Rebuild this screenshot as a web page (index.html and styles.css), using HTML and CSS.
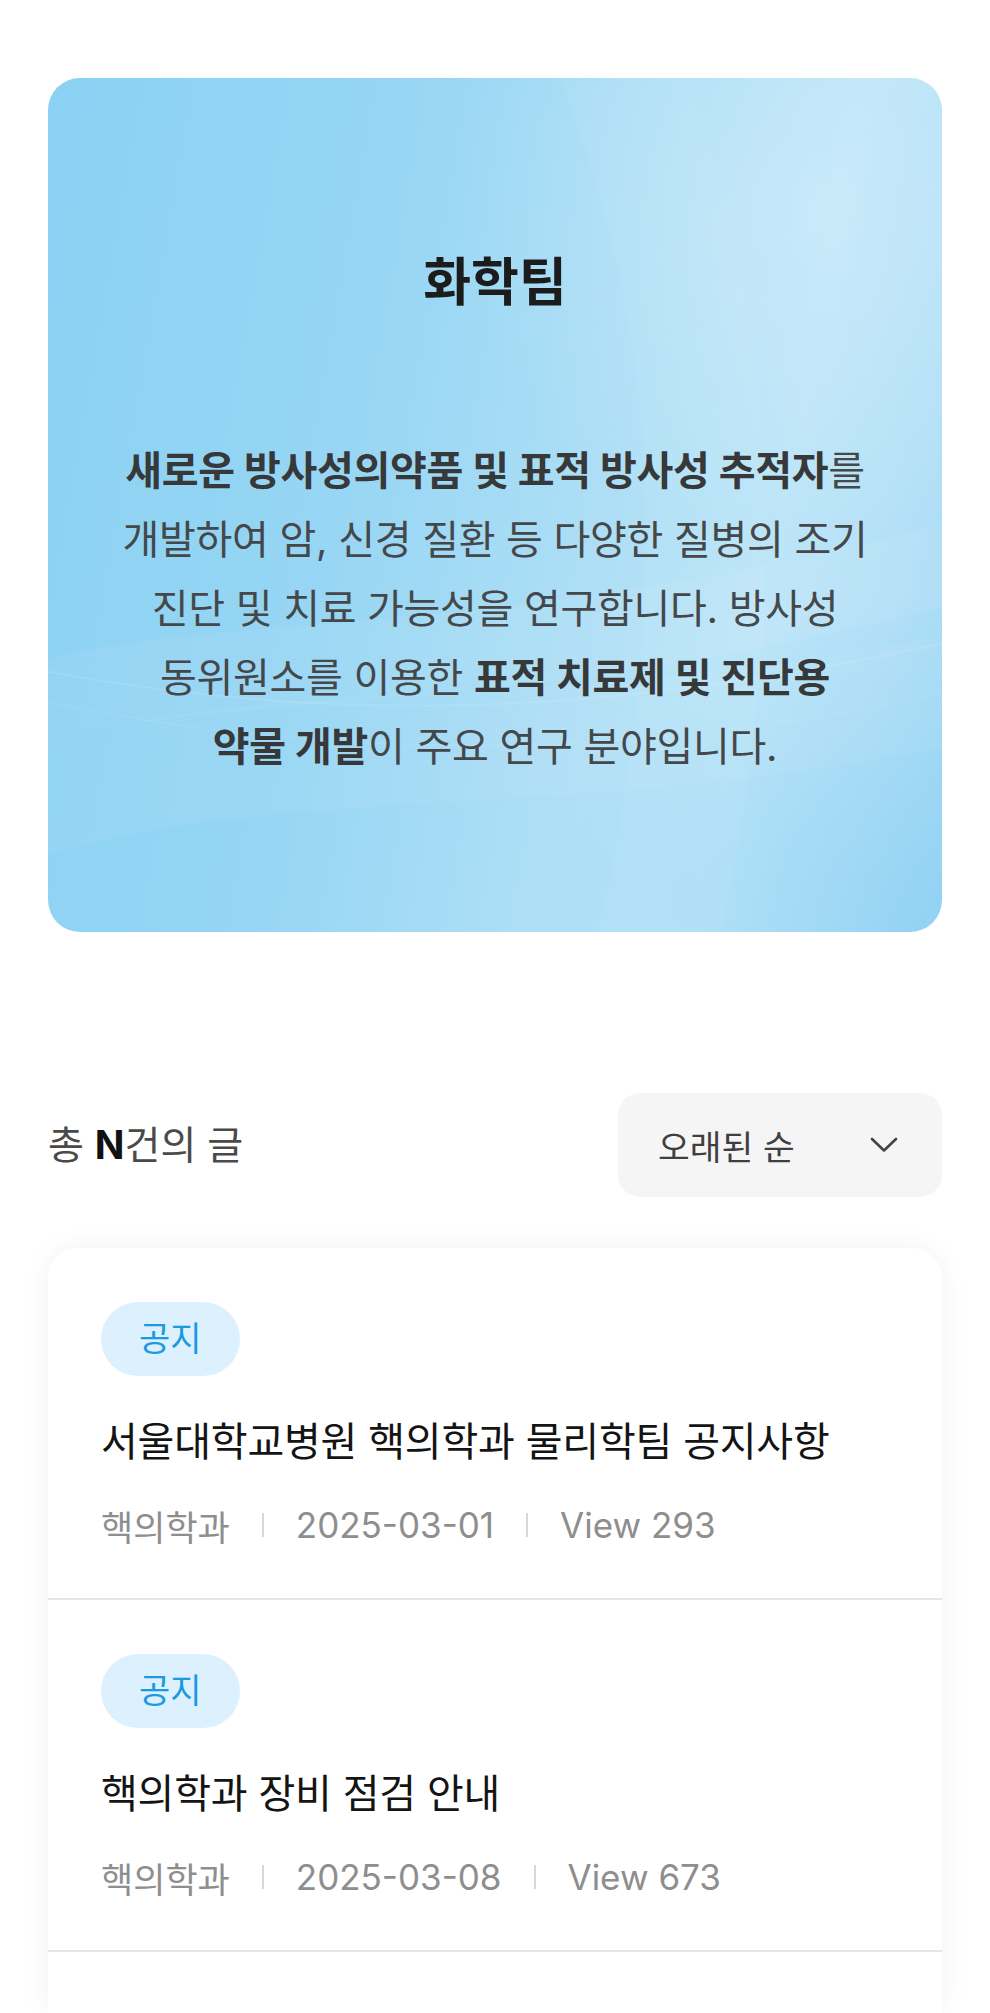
FILE: index.html
```html
<!DOCTYPE html>
<html lang="ko">
<head>
<meta charset="utf-8">
<title>화학팀</title>
<link rel="stylesheet" href="styles.css">
</head>
<body>
<div class="page">
  <section class="hero">
    <h1 class="hero-title">화학팀</h1>
    <p class="hero-desc"><strong>새로운 방사성의약품 및 표적 방사성 추적자</strong>를<br>개발하여 암, 신경 질환 등 다양한 질병의 조기<br>진단 및 치료 가능성을 연구합니다. 방사성<br>동위원소를 이용한 <strong>표적 치료제 및 진단용</strong><br><strong>약물 개발</strong>이 주요 연구 분야입니다.</p>
  </section>

  <div class="list-head">
    <p class="total">총 <b>N</b>건의 글</p>
    <button class="sort" type="button">
      <span>오래된 순</span>
      <svg class="chev" width="28" height="16" viewBox="0 0 28 16" aria-hidden="true"><path d="M2 2 L14 13.5 L26 2" fill="none" stroke="#444" stroke-width="2.6" stroke-linecap="round" stroke-linejoin="round"/></svg>
    </button>
  </div>

  <div class="board">
    <article class="post">
      <span class="badge">공지</span>
      <h2 class="post-title">서울대학교병원 핵의학과 물리학팀 공지사항</h2>
      <div class="meta"><span>핵의학과</span><i class="sep"></i><span>2025-03-01</span><i class="sep"></i><span>View 293</span></div>
    </article>
    <article class="post">
      <span class="badge">공지</span>
      <h2 class="post-title">핵의학과 장비 점검 안내</h2>
      <div class="meta"><span>핵의학과</span><i class="sep"></i><span>2025-03-08</span><i class="sep"></i><span>View 673</span></div>
    </article>
  </div>
</div>
</body>
</html>
```

FILE: styles.css
```css
* { box-sizing: border-box; }

html, body {
  margin: 0;
  padding: 0;
  background: #ffffff;
}

body {
  font-family: "Inter", "Noto Sans CJK KR", "Noto Sans", sans-serif;
  color: #222;
}

.page {
  height: 100vh;
  overflow: hidden;
  padding: 78px 48px 0;
  display: flex;
  flex-direction: column;
}

/* ---------- hero ---------- */
.hero {
  flex: none;
  height: 854px;
  border-radius: 32px;
  padding: 171px 30px 0;
  text-align: center;
  background-color: #9bd7f5;
  background-image:
    url("data:image/svg+xml;utf8,<svg xmlns='http://www.w3.org/2000/svg' width='894' height='854' viewBox='0 0 894 854' preserveAspectRatio='none'><g fill='none' stroke='white' stroke-linecap='round'><path d='M-60 640 C 160 560 420 620 960 470' stroke-width='80' stroke-opacity='0.06'/><path d='M-60 740 C 200 640 520 700 960 600' stroke-width='110' stroke-opacity='0.05'/><path d='M-20 590 C 240 640 520 650 920 560' stroke-width='2' stroke-opacity='0.10'/><path d='M-20 620 C 260 680 560 690 920 610' stroke-width='1.5' stroke-opacity='0.08'/><path d='M560 -40 C 660 200 700 500 600 900' stroke-width='120' stroke-opacity='0.04'/></g></svg>"),
    radial-gradient(ellipse 45% 40% at 100% 100%, rgba(130, 204, 242, 0.55), rgba(130, 204, 242, 0) 100%),
    radial-gradient(ellipse 40% 40% at 85% 15%, rgba(255, 255, 255, 0.2), rgba(255, 255, 255, 0) 100%),
    linear-gradient(100deg, #8bd1f3 0%, #97d6f4 35%, #afdff6 62%, #bce5f8 78%, #b3e0f7 90%, #a3d9f5 100%);
  background-repeat: no-repeat;
  background-size: 100% 100%;
}

.hero-title {
  margin: 0;
  font-size: 52px;
  line-height: 68px;
  font-weight: 700;
  color: #1c1c1c;
}

.hero-desc {
  margin: 119px 0 0;
  font-size: 40px;
  line-height: 69px;
  font-weight: 400;
  color: #45484b;
  letter-spacing: -0.3px;
}

.hero-desc strong {
  font-weight: 700;
  color: #363839;
}

/* ---------- list header ---------- */
.list-head {
  flex: none;
  margin-top: 161px;
  display: flex;
  align-items: center;
  justify-content: space-between;
}

.total {
  margin: 0;
  font-size: 39px;
  line-height: 52px;
  color: #4a4a4a;
}

.total b {
  font-weight: 700;
  color: #111;
}

.sort {
  width: 324px;
  height: 104px;
  border: 0;
  border-radius: 22px;
  background: #f5f5f5;
  padding: 0 44px 0 40px;
  display: flex;
  align-items: center;
  justify-content: space-between;
  font-family: inherit;
  font-size: 34.5px;
  color: #3f3f3f;
}

.chev { display: block; }

/* ---------- board ---------- */
.board {
  flex: 1 0 auto;
  margin-top: 51px;
  background: #fff;
  border-radius: 30px 30px 0 0;
  box-shadow: 0 0 28px rgba(0, 0, 0, 0.055);
}

.post {
  padding: 54px 53px 51px;
  border-bottom: 2px solid #e6e6e6;
  display: flex;
  flex-direction: column;
  align-items: flex-start;
}

.badge {
  height: 74px;
  padding: 0 38px;
  border-radius: 37px;
  background: #ddf0fd;
  color: #1b9ae0;
  font-size: 34px;
  line-height: 74px;
  margin-bottom: 41px;
}

.post-title {
  margin: 0;
  font-size: 40px;
  line-height: 50px;
  font-weight: 400;
  color: #141414;
  letter-spacing: -0.2px;
}

.meta {
  margin-top: 36px;
  height: 44px;
  display: flex;
  align-items: center;
  gap: 32px;
  font-size: 35px;
  color: #8e8e8e;
}

.sep {
  width: 2px;
  height: 24px;
  background: #d6d6d6;
}
```
